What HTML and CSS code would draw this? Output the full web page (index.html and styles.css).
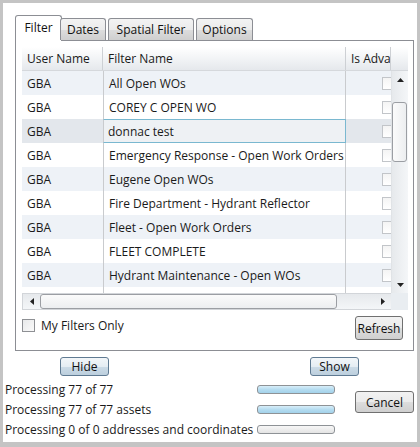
FILE: index.html
```html
<!DOCTYPE html>
<html>
<head>
<meta charset="utf-8">
<link rel="stylesheet" href="styles.css">
</head>
<body>
<div class="window">
  <div class="tabctl">
    <div class="tabstrip">
      <div class="tab sel w-filter">Filter</div>
      <div class="tab w-dates">Dates</div>
      <div class="tab w-spatial">Spatial Filter</div>
      <div class="tab w-options">Options</div>
    </div>
    <div class="panel">
      <div class="grid">
        <div class="ghead">
          <div class="hc c1">User Name</div>
          <div class="hc c2">Filter Name</div>
          <div class="hc c3">Is Adva</div>
          <div class="hc c4"></div>
        </div>
        <div class="gbody">
          <div class="rows">
            <div class="row alt"><div class="cell c1">GBA</div><div class="cell c2">All Open WOs</div><div class="cell c3"><span class="cb"></span></div></div>
            <div class="row"><div class="cell c1">GBA</div><div class="cell c2">COREY C OPEN WO</div><div class="cell c3"><span class="cb"></span></div></div>
            <div class="row selrow"><div class="cell c1">GBA</div><div class="cell c2 focus">donnac test</div><div class="cell c3"><span class="cb"></span></div></div>
            <div class="row"><div class="cell c1">GBA</div><div class="cell c2">Emergency Response - Open Work Orders</div><div class="cell c3"><span class="cb"></span></div></div>
            <div class="row alt"><div class="cell c1">GBA</div><div class="cell c2">Eugene Open WOs</div><div class="cell c3"><span class="cb"></span></div></div>
            <div class="row"><div class="cell c1">GBA</div><div class="cell c2">Fire Department - Hydrant Reflector</div><div class="cell c3"><span class="cb"></span></div></div>
            <div class="row alt"><div class="cell c1">GBA</div><div class="cell c2">Fleet - Open Work Orders</div><div class="cell c3"><span class="cb"></span></div></div>
            <div class="row"><div class="cell c1">GBA</div><div class="cell c2">FLEET COMPLETE</div><div class="cell c3"><span class="cb"></span></div></div>
            <div class="row alt"><div class="cell c1">GBA</div><div class="cell c2">Hydrant Maintenance - Open WOs</div><div class="cell c3"><span class="cb"></span></div></div>
            <div class="row"><div class="cell c1"></div><div class="cell c2"></div><div class="cell c3"><span class="cb"></span></div></div>
          </div>
          <div class="vscroll">
            <div class="arrow"><svg width="7" height="4" viewBox="0 0 7 4"><path d="M0 4 L3.5 0 L7 4 Z" fill="#222"/></svg></div>
            <div class="vtrack"><div class="vthumb"></div></div>
            <div class="arrow"><svg width="7" height="4" viewBox="0 0 7 4"><path d="M0 0 L7 0 L3.5 4 Z" fill="#222"/></svg></div>
          </div>
        </div>
        <div class="gfoot">
          <div class="hscroll">
            <div class="harrow"><svg width="4" height="7" viewBox="0 0 4 7"><path d="M4 0 L4 7 L0 3.5 Z" fill="#222"/></svg></div>
            <div class="htrack"><div class="hthumb"></div></div>
            <div class="harrow"><svg width="4" height="7" viewBox="0 0 4 7"><path d="M0 0 L4 3.5 L0 7 Z" fill="#222"/></svg></div>
          </div>
          <div class="corner"></div>
        </div>
      </div>
      <div class="below">
        <label class="chk"><span class="box"></span><span>My Filters Only</span></label>
        <button class="btn refresh">Refresh</button>
      </div>
    </div>
  </div>
  <div class="hsrow">
    <button class="btn blue hide">Hide</button>
    <button class="btn blue show">Show</button>
  </div>
  <div class="progress">
    <div class="ptext">Processing 77 of 77</div>
    <div class="bar full"></div>
    <div class="ptext">Processing 77 of 77 assets</div>
    <div class="bar full"></div>
    <div class="ptext">Processing 0 of 0 addresses and coordinates</div>
    <div class="bar"></div>
    <button class="btn cancel">Cancel</button>
  </div>
</div>
</body>
</html>
```
FILE: styles.css
```css
* { box-sizing: border-box; }
html, body { margin: 0; padding: 0; background: #fff; }
body {
  font-family: "Open Sans", "Noto Sans", sans-serif;
  font-size: 12px;
  color: #1a1a1a;
}
.window {
  width: 420px;
  height: 447px;
  border: 3px solid #c4c4c4;
  border-bottom-width: 5px;
  background: #fff;
  display: flex;
  flex-direction: column;
}
.tabctl {
  margin: 12px 3px 0 12px;
  display: flex;
  flex-direction: column;
}
.tabstrip {
  height: 25px;
  display: flex;
  align-items: flex-end;
  position: relative;
  z-index: 2;
}
.tab {
  height: 22px;
  border: 1px solid #8c8e94;
  border-bottom: none;
  border-radius: 3px 3px 0 0;
  background: linear-gradient(#f3f3f3, #ebebeb 50%, #dddddd 51%, #cfcfcf);
  display: flex;
  align-items: center;
  justify-content: center;
  margin-left: 2px;
  color: #111;
}
.tab.sel {
  height: 26px;
  margin-bottom: -1px;
  margin-left: 0;
  background: #fff;
  padding-bottom: 3px;
}
.w-filter { width: 47px; margin-right: -2px; }
.w-dates { width: 46px; margin-left: 0; }
.w-spatial { width: 86px; margin-left: 2px; }
.w-options { width: 57px; }
.panel {
  border: 1px solid #8c8e94;
  height: 311px;
  padding: 6px 6px 10px 6px;
  display: flex;
  flex-direction: column;
  background: #fff;
}
.grid {
  width: 386px;
  height: 263px;
  display: flex;
  flex-direction: column;
}
.ghead {
  height: 24px;
  display: flex;
  background: linear-gradient(#ffffff, #f2f4f6 50%, #e5e8ec);
  border-bottom: 1px solid #d5d8dc;
}
.c1 { width: 81px; flex: none; }
.c2 { width: 243px; flex: none; }
.c3 { width: 45px; flex: none; }
.c4 { width: 17px; flex: none; }
.hc {
  border-right: 1px solid #cdd0d4;
  padding-left: 5px;
  display: flex;
  align-items: center;
  white-space: nowrap;
  overflow: hidden;
}
.hc.c4 { border-right: none; }
.gbody {
  height: 222px;
  display: flex;
}
.rows {
  width: 369px;
  height: 222px;
  overflow: hidden;
}
.row {
  height: 24px;
  display: flex;
  background: #fff;
}
.row.alt { background: #eef2f7; }
.row.selrow { background: #e3e7ec; }
.cell {
  height: 24px;
  padding-left: 5px;
  display: flex;
  align-items: center;
  white-space: nowrap;
  overflow: hidden;
  border-right: 1px solid #c9cbce;
}
.cell.c1 { border-right: none; width: 81px; }
.cell.c1 + .c2 { border-left: 1px solid #c9cbce; }
.cell.c2 { width: 243px; }
.cell.c3 { border-right: none; padding-left: 36px; }
.cell.focus {
  border: 1px solid #7ab8d0;
  padding-left: 4px;
  background: #eef1f4;
}
.cb {
  width: 13px;
  height: 13px;
  flex: none;
  border: 1px solid #c2c5c9;
  background: linear-gradient(#f4f4f4, #ffffff);
}
.vscroll {
  width: 17px;
  height: 222px;
  display: flex;
  flex-direction: column;
  background: linear-gradient(90deg, #e6e9ec, #f4f6f8);
  border-left: 1px solid #e0e3e6;
  position: relative;
  z-index: 1;
}
.arrow {
  height: 17px;
  display: flex;
  align-items: center;
  justify-content: center;
  flex: none;
}
.vtrack {
  flex: 1;
  padding-top: 14px;
}
.vthumb {
  width: 15px;
  height: 60px;
  border: 1px solid #9b9ea3;
  border-radius: 3px;
  background: linear-gradient(90deg, #fbfbfb, #eceef0);
}
.gfoot {
  height: 17px;
  display: flex;
}
.hscroll {
  width: 369px;
  display: flex;
  border: 1px solid #d2d5d9;
  border-right: none;
  background: linear-gradient(#e6e9ec, #f4f6f8);
}
.harrow {
  width: 17px;
  display: flex;
  align-items: center;
  justify-content: center;
  flex: none;
}
.htrack {
  flex: 1;
  display: flex;
  align-items: stretch;
}
.hthumb {
  width: 297px;
  border: 1px solid #9b9ea3;
  border-radius: 3px;
  background: linear-gradient(#fbfbfb, #eceef0);
}
.corner {
  width: 17px;
  background: #e9edf1;
}
.below {
  margin-top: 6px;
  height: 24px;
  display: flex;
  align-items: center;
  justify-content: space-between;
}
.chk {
  display: flex;
  align-items: center;
  gap: 6px;
  margin-top: -6px;
}
.box {
  width: 13px;
  height: 13px;
  border: 1px solid #8e9094;
  background: linear-gradient(135deg, #e8e9ea, #fafafa);
  display: inline-block;
}
.btn {
  font-family: inherit;
  font-size: 12px;
  color: #111;
  border: 1px solid #707070;
  border-radius: 3px;
  background: linear-gradient(#f2f2f2, #ebebeb 50%, #dddddd 51%, #cfcfcf);
  padding: 0;
  margin: 0;
  display: flex;
  align-items: center;
  justify-content: center;
}
.btn.blue {
  border-color: #5f7a92;
  background: linear-gradient(#f2f6f9, #e5edf3 50%, #ccdbe7 51%, #bccfdd);
}
.refresh {
  width: 48px;
  height: 24px;
  margin-right: 4px;
}
.hsrow {
  height: 19px;
  margin-top: 6px;
  display: flex;
}
.hide { width: 49px; height: 19px; margin-left: 57px; }
.show { width: 49px; height: 19px; margin-left: 201px; }
.progress {
  margin-top: 3px;
  padding-left: 2px;
  display: grid;
  grid-template-columns: 252px 78px 20px 59px;
  grid-template-rows: 20px 20px 20px;
  align-items: center;
}
.ptext { grid-column: 1; white-space: nowrap; }
.bar {
  grid-column: 2;
  height: 9px;
  border: 1px solid #8e9296;
  border-radius: 3px;
  background: linear-gradient(#f7f7f7, #e4e4e4);
}
.bar.full {
  background: linear-gradient(#d8eef9, #b5dcf0 50%, #a3d2ea);
}
.cancel {
  grid-column: 4;
  grid-row: 1 / span 3;
  align-self: start;
  margin-top: 12px;
  width: 59px;
  height: 22px;
}
```
